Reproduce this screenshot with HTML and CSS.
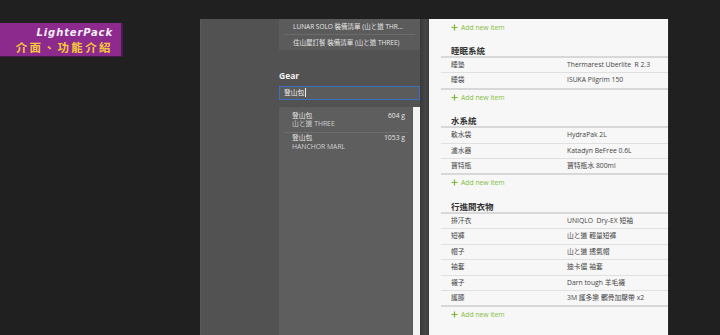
FILE: index.html
```html
<!DOCTYPE html>
<html lang="zh-Hant">
<head>
    <meta charset="UTF-8">
    <meta name="viewport" content="width=device-width, initial-scale=1.0">
    <title>LighterPack 介面、功能介紹</title>
    <link rel="stylesheet" href="styles.css">
</head>
<body>
    <div class="stage">
        <!-- Title card on the left -->
        <div class="promo">
            <div class="banner">
                <div class="banner-en">LighterPack</div>
                <div class="banner-zh">介面、功能介紹</div>
            </div>
        </div>

        <div class="app">
            <aside class="sidebar">
                <div class="lists">
                    <div class="list-row">LUNAR SOLO 裝備清單 (山と道 THR...</div>
                    <div class="list-row">住山屋訂餐 裝備清單 (山と道 THREE)</div>
                </div>

                <h3 class="gear-title">Gear</h3>
                <div class="search"><span class="caret">登山包</span></div>

                <div class="results-wrap">
                    <div class="results">
                        <div class="result">
                            <div class="result-text">
                                <div class="result-name">登山包</div>
                                <div class="result-sub">山と道 THREE</div>
                            </div>
                            <div class="result-weight">604 g</div>
                        </div>
                        <div class="result">
                            <div class="result-text">
                                <div class="result-name">登山包</div>
                                <div class="result-sub">HANCHOR MARL</div>
                            </div>
                            <div class="result-weight">1053 g</div>
                        </div>
                    </div>
                    <div class="scrollbar"></div>
                </div>
            </aside>

            <div class="shade"></div>

            <main class="main">
                <div class="add-item">
                    <svg class="plus" viewBox="0 0 8 8"><path d="M4 0.5V7.5M0.5 4H7.5"/></svg>
                    Add new item
                </div>

                <section class="category">
                    <h2 class="category-title">睡眠系統</h2>
                    <div class="items">
                        <div class="item"><span>睡墊</span><span>Thermarest Uberlite&nbsp; R 2.3</span></div>
                        <div class="item"><span>睡袋</span><span>ISUKA Pilgrim 150</span></div>
                    </div>
                    <div class="add-item">
                        <svg class="plus" viewBox="0 0 8 8"><path d="M4 0.5V7.5M0.5 4H7.5"/></svg>
                        Add new item
                    </div>
                </section>

                <section class="category">
                    <h2 class="category-title">水系統</h2>
                    <div class="items">
                        <div class="item"><span>軟水袋</span><span>HydraPak 2L</span></div>
                        <div class="item"><span>濾水器</span><span>Katadyn BeFree 0.6L</span></div>
                        <div class="item"><span>寶特瓶</span><span>寶特瓶水 800ml</span></div>
                    </div>
                    <div class="add-item">
                        <svg class="plus" viewBox="0 0 8 8"><path d="M4 0.5V7.5M0.5 4H7.5"/></svg>
                        Add new item
                    </div>
                </section>

                <section class="category">
                    <h2 class="category-title">行進間衣物</h2>
                    <div class="items">
                        <div class="item"><span>排汗衣</span><span>UNIQLO&nbsp; Dry-EX 短袖</span></div>
                        <div class="item"><span>短褲</span><span>山と道 輕量短褲</span></div>
                        <div class="item"><span>帽子</span><span>山と道 透氣帽</span></div>
                        <div class="item"><span>袖套</span><span>迪卡儂 袖套</span></div>
                        <div class="item"><span>襪子</span><span>Darn tough 羊毛襪</span></div>
                        <div class="item"><span>護膝</span><span>3M 護多樂 髕骨加壓帶 x2</span></div>
                    </div>
                    <div class="add-item">
                        <svg class="plus" viewBox="0 0 8 8"><path d="M4 0.5V7.5M0.5 4H7.5"/></svg>
                        Add new item
                    </div>
                </section>
            </main>
        </div>
    </div>
</body>
</html>
```

FILE: styles.css
```css
/* Page */
body {
    margin: 0;
    background: #202020;
    font-family: "Open Sans", "Noto Sans CJK TC", sans-serif;
    overflow: hidden;
}

.stage {
    display: flex;
    height: 100vh;
}

/* Title card */
.promo {
    width: 200px;
    flex-shrink: 0;
    padding-top: 23px;
}

.banner {
    width: 113px;
    height: 33px;
    padding-right: 8px;
    background: #8d2a8e;
    border-right: 2px solid #4b1a4c;
    border-bottom: 1px solid #4b1a4c;
    text-align: right;
}

.banner-en {
    color: #f4eef6;
    font-family: "DejaVu Sans", sans-serif;
    font-weight: bold;
    font-style: oblique;
    font-size: 10px;
    letter-spacing: 0.9px;
    line-height: 14px;
    padding-top: 3px;
}

.banner-zh {
    color: #f6c93a;
    font-family: "Noto Sans CJK TC", sans-serif;
    font-weight: bold;
    font-size: 11.5px;
    letter-spacing: 2.4px;
    line-height: 14px;
}

/* App frame */
.app {
    display: flex;
    margin-top: 19px;
    height: calc(100vh - 19px);
}

/* Sidebar */
.sidebar {
    width: 141px;
    padding-left: 78px;
    background: #525252;
    border-left: 1px solid #5a5a5a;
    display: flex;
    flex-direction: column;
    color: #e6e6e6;
}

.lists {
    background: #5b5b5b;
    height: 31px;
    font-size: 6.5px;
}

.list-row {
    margin: 0 5px;
    padding-left: 9px;
    line-height: 15px;
    white-space: nowrap;
}

.list-row + .list-row {
    border-top: 1px solid #6b6b6b;
}

.gear-title {
    margin: 20px 0 4px;
    font-size: 8.5px;
    line-height: 12px;
    font-weight: bold;
    color: #f0f0f0;
}

.search {
    height: 12px;
    border: 1px solid #3f6fc0;
    background: #5b5b5b;
    padding-left: 4px;
    font-size: 6.8px;
    line-height: 12px;
    color: #f2f2f2;
}

.caret {
    border-right: 1px solid #f2f2f2;
    padding-right: 0.5px;
}

.results-wrap {
    flex: 1;
    display: flex;
    margin-top: 7px;
}

.results {
    flex: 1;
    background: #5e5e5e;
    padding-top: 3px;
}

.scrollbar {
    width: 7px;
    background: #f3f3f3;
    border-left: 1px solid #575757;
}

.result {
    display: flex;
    justify-content: space-between;
    margin: 0 4px 0 5px;
    padding: 1.5px 3px 3px 8px;
    font-size: 6.8px;
    line-height: 8.5px;
}

.result + .result {
    border-top: 1px solid #6e6e6e;
}

.result-sub {
    color: #cfcfcf;
}

/* Shadow strip between sidebar and list */
.shade {
    width: 9px;
    background: linear-gradient(90deg, #383838, #474747 60%, #3c3c3c);
}

/* Main list */
.main {
    width: 240px;
    background: #f7f7f7;
    padding: 0.5px 0 0 12px;
    box-sizing: border-box;
    overflow: hidden;
    border-right: 1px solid #2c2c2c;
}

.category {
    margin-top: 11px;
}

.category-title {
    margin: 0;
    padding-left: 10px;
    font-size: 8.5px;
    line-height: 11px;
    font-weight: bold;
    color: #333;
}

.items {
    border-top: 2px solid #d8d8d8;
    border-bottom: 2px solid #d8d8d8;
}

.item {
    display: grid;
    grid-template-columns: 116px 1fr;
    padding-left: 10px;
    height: 14.4px;
    line-height: 14.4px;
    font-size: 6.8px;
    color: #444;
    white-space: nowrap;
}

.item + .item {
    border-top: 1px solid #e0e0e0;
}

.add-item {
    display: flex;
    align-items: center;
    gap: 3px;
    padding: 0.5px 0 0 10px;
    height: 14px;
    font-size: 6.8px;
    color: #86bd3c;
}

.plus {
    width: 7px;
    height: 7px;
    stroke: #7fb632;
    stroke-width: 1.4;
    fill: none;
}
```
